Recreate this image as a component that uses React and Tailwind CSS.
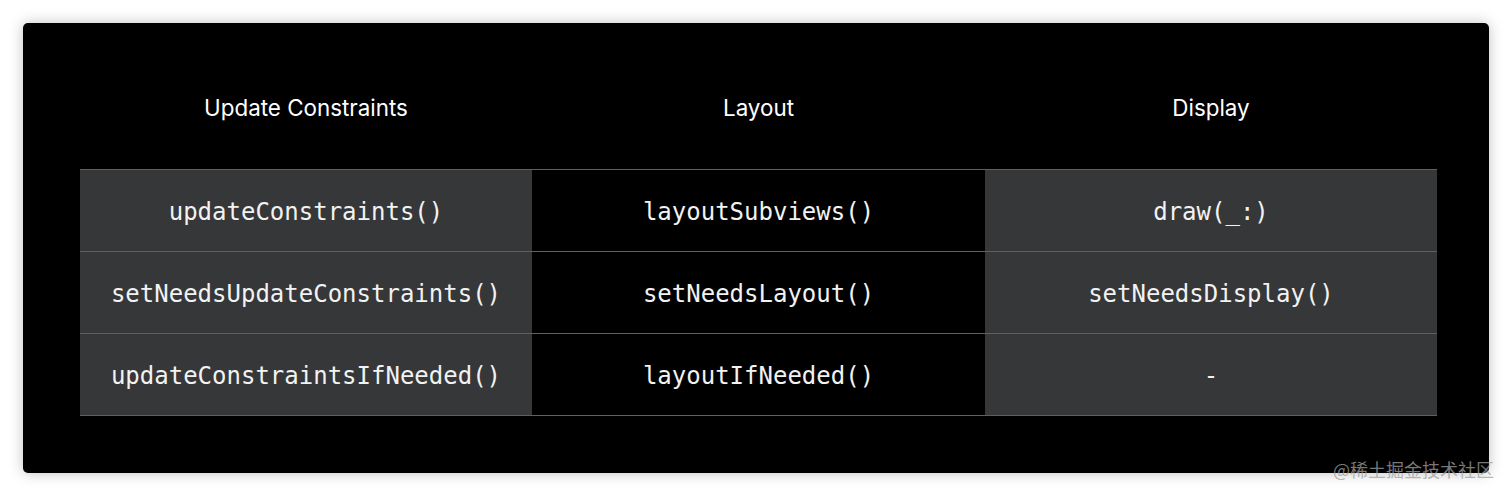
import React from "react";

const rows = [
  ["updateConstraints()", "layoutSubviews()", "draw(_:)"],
  ["setNeedsUpdateConstraints()", "setNeedsLayout()", "setNeedsDisplay()"],
  ["updateConstraintsIfNeeded()", "layoutIfNeeded()", "-"],
];

export default function App() {
  return (
    <div className="relative w-[1512px] h-[497px] bg-white overflow-hidden">
      <div className="absolute left-[23px] top-[23px] w-[1466px] h-[450px] bg-black rounded-[5px] shadow-[0_0_14px_rgba(0,0,0,0.25)]">
        <div className="pl-[57px] pr-[52px]">
          <div
            className="grid grid-cols-[452px_453px_452px] pt-[71px] pb-[47px] text-[22.4px] leading-[28px] text-white"
            style={{ fontFamily: "Inter, 'Noto Sans', sans-serif" }}
          >
            <div className="text-center">Update Constraints</div>
            <div className="text-center">Layout</div>
            <div className="text-center">Display</div>
          </div>
          <div
            className="border-t border-[#606060] text-[24px] text-[#f2f2f2]"
            style={{ fontFamily: "'DejaVu Sans Mono', 'Liberation Mono', monospace" }}
          >
            {rows.map((r, i) => (
              <div
                key={i}
                className="grid grid-cols-[452px_453px_452px] h-[82px] border-b border-[#606060]"
              >
                <div className="bg-[#363738] flex items-center justify-center pt-[2px]">{r[0]}</div>
                <div className="bg-black flex items-center justify-center pt-[2px]">{r[1]}</div>
                <div className="bg-[#363738] flex items-center justify-center pt-[2px]">{r[2]}</div>
              </div>
            ))}
          </div>
        </div>
      </div>
      <div
        className="absolute left-[1333px] top-[458px] text-[18px] leading-[22px] text-[rgba(160,160,160,0.75)] whitespace-nowrap"
        style={{ fontFamily: "'Noto Sans CJK SC', 'Noto Sans', sans-serif" }}
      >
        @稀土掘金技术社区
      </div>
    </div>
  );
}
